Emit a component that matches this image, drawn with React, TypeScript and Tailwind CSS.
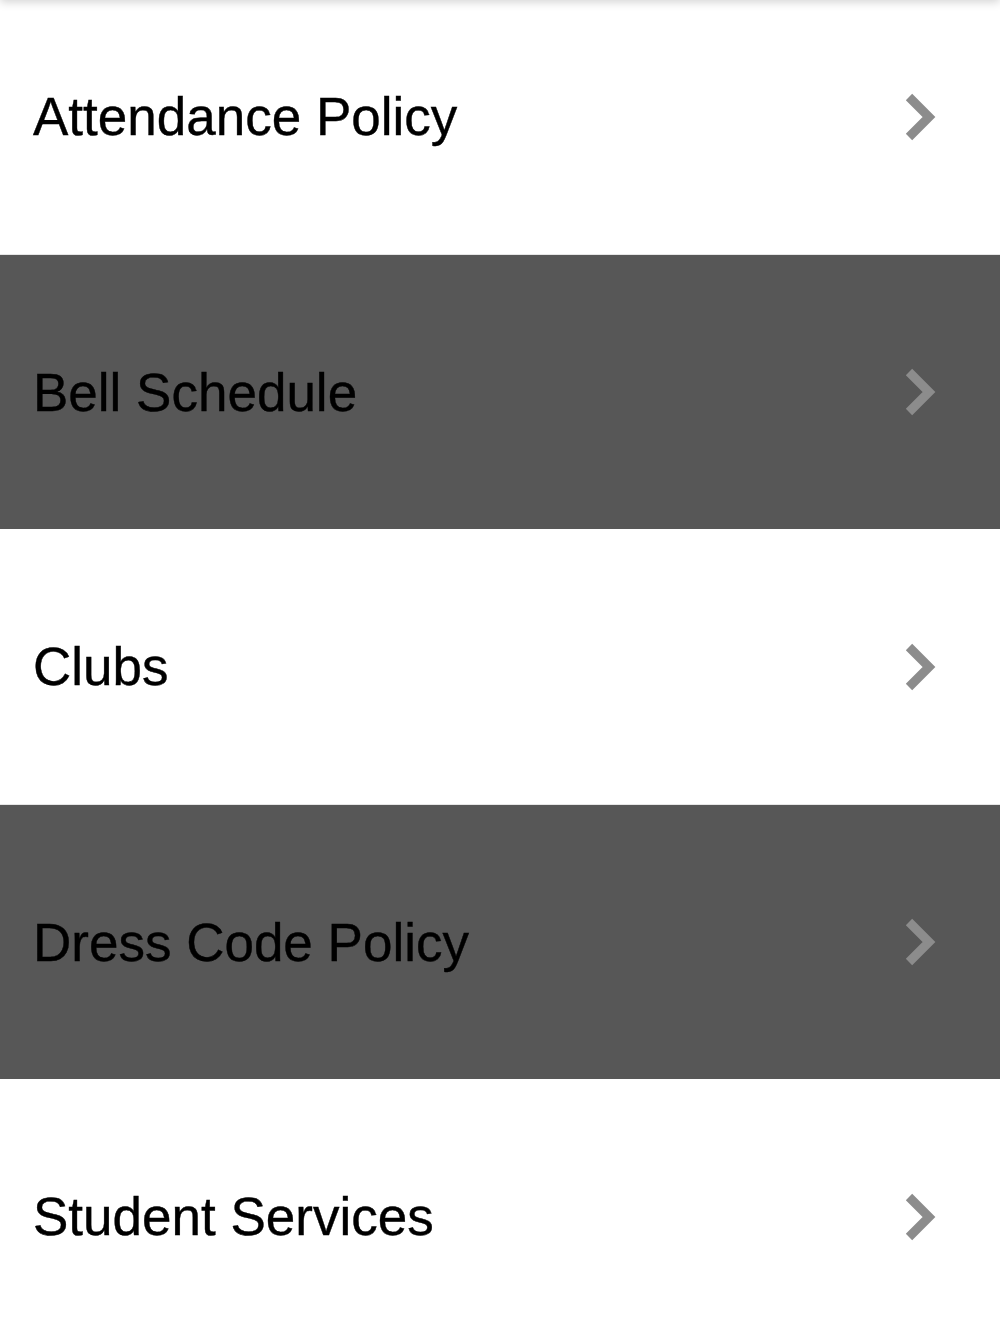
const items = [
  "Attendance Policy",
  "Bell Schedule",
  "Clubs",
  "Dress Code Policy",
  "Student Services",
];

function Chevron() {
  return (
    <svg width="32" height="50" viewBox="0 0 32 50" className="shrink-0">
      <polyline
        points="5,5 25,25 5,45"
        fill="none"
        stroke="#8c8c8c"
        strokeWidth="9"
        strokeLinejoin="miter"
      />
    </svg>
  );
}

export default function App() {
  return (
    <div className="relative w-[1000px] h-[1334px] overflow-hidden bg-white">
      <div className="absolute left-0 right-0 -top-[20px] h-[20px] shadow-[0_2px_10px_rgba(0,0,0,0.18)] z-10" />
      <ul className="-mt-[21px]">
        {items.map((item, i) => (
          <li
            key={item}
            className={
              i % 2 === 1
                ? "flex items-center justify-between h-[275px] pl-[33px] pr-[64px] bg-[#575757] border-t border-[#e6e6e6]"
                : "flex items-center justify-between h-[275px] pl-[33px] pr-[64px] bg-white"
            }
          >
            <span className="font-['Liberation_Sans',Arial,sans-serif] text-[53px] text-black leading-none [-webkit-text-stroke:0.4px_black]">
              {item}
            </span>
            <Chevron />
          </li>
        ))}
      </ul>
    </div>
  );
}
